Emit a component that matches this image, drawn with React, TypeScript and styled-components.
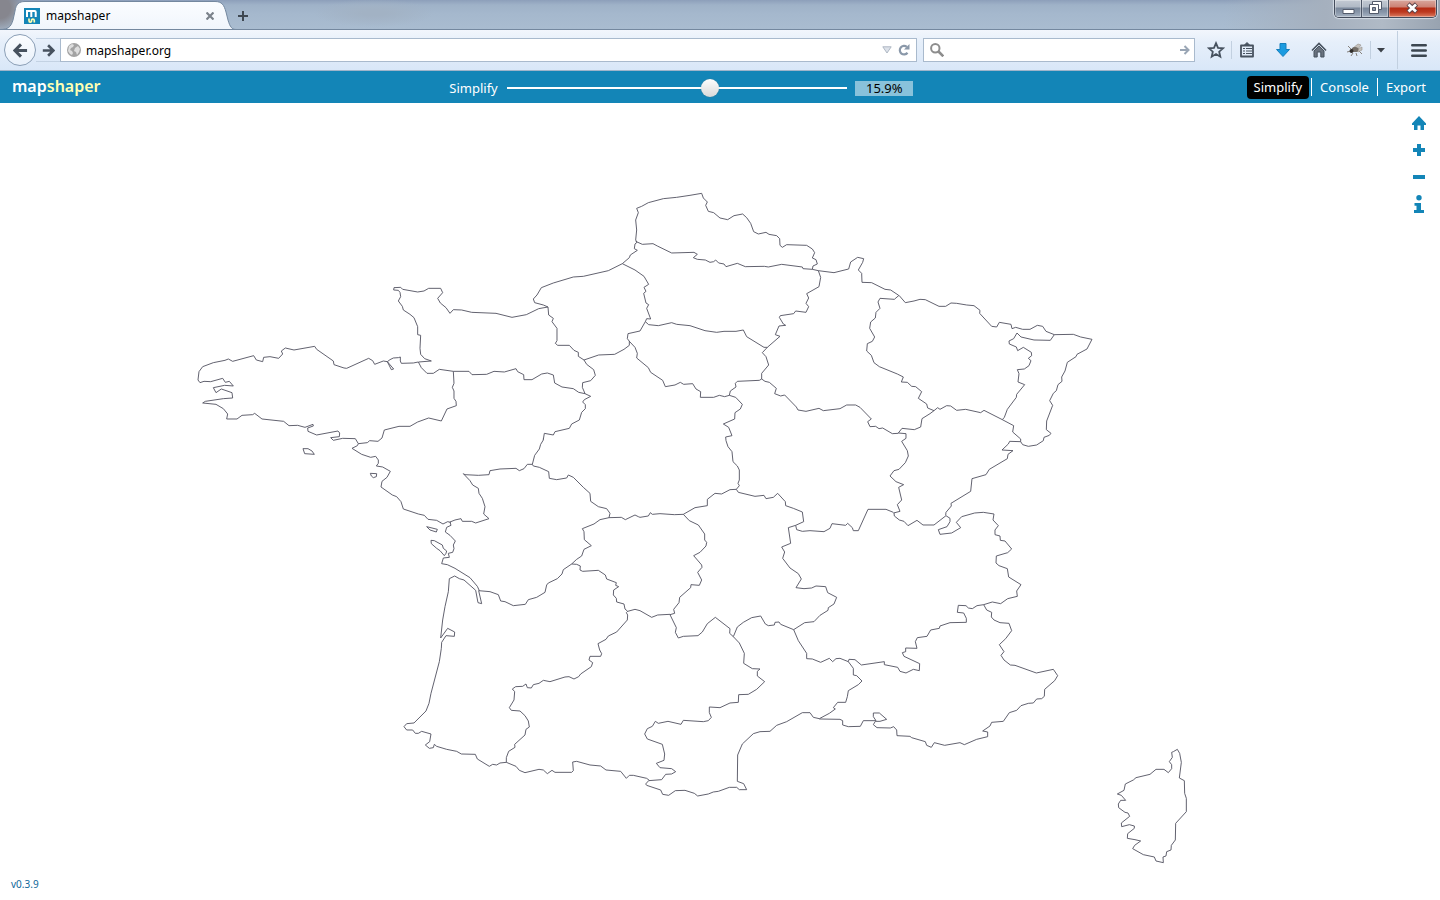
import React, { useState } from "react";
import styled, { createGlobalStyle } from "styled-components";

const GlobalStyle = createGlobalStyle`
  * { box-sizing: border-box; }
  body {
    margin: 0;
    background: #fff;
    font-family: "Noto Sans", "Open Sans", sans-serif;
  }
  button, input { font: inherit; margin: 0; padding: 0; border: 0; outline: 0; background: none; color: inherit; }
  button { cursor: pointer; }
  svg { display: block; }
`;

const accent = "#1385b7";

/* ---------- browser window ---------- */

const Page = styled.div`
  display: flex;
  flex-direction: column;
  min-height: 100vh;
`;

const TabStrip = styled.div`
  display: flex;
  align-items: flex-start;
  height: 30px;
  overflow: hidden;
  border-bottom: 1px solid #74889f;
  background:
    radial-gradient(ellipse 26px 26px at 0 8px, #86868e 40%, transparent),
    radial-gradient(ellipse 60px 14px at 374px 13px, #a2b2c4 20%, transparent),
    linear-gradient(to right, transparent 85%, #a5b0be 92%, #b0bac6 96%, #98a3b0),
    linear-gradient(#8d9fba 0, #9fb2c8 5px, #a5b8cd 14px, #a9bcd0 100%);
`;

const Tab = styled.div`
  position: relative;
  display: flex;
  align-items: center;
  flex: none;
  width: 236px;
  height: 30px;
  padding: 2px 20px 0 24px;
  font-size: 12px;
  line-height: 16px;
  color: #000;
`;

const TabShape = styled.svg`
  position: absolute;
  inset: 0;
`;

const TabTitle = styled.span`
  position: relative;
  flex: 1;
  padding-left: 6px;
`;

const Favicon = styled.svg`
  position: relative;
`;

const PlainButton = styled.button<{ $w?: number }>`
  position: relative;
  display: flex;
  flex: none;
  align-items: center;
  justify-content: center;
  width: ${(p) => p.$w ?? 24}px;
  height: 24px;
`;

const NewTab = styled(PlainButton)`
  width: 14px;
  height: 32px;
`;

const WindowControls = styled.div`
  display: flex;
  margin: 0 3px 0 auto;
  height: 18px;
  border: 1px solid #434c5c;
  border-top: 0;
  border-radius: 0 0 5px 5px;
  box-shadow: 0 0 1px 1px #d5dde6;
  overflow: hidden;
`;

const WindowButton = styled.button<{ $close?: boolean }>`
  display: flex;
  align-items: center;
  justify-content: center;
  width: ${(p) => (p.$close ? 47 : 27)}px;
  padding-bottom: 2px;
  border-right: ${(p) => (p.$close ? 0 : 1)}px solid #4c5666;
  box-shadow: inset 0 0 0 1px rgba(255, 255, 255, 0.35);
  background: ${(p) =>
    p.$close
      ? "linear-gradient(#d9a79d 0, #cc8173 7px, #b52c14 8px, #bd3a20 12px, #dc7d62)"
      : "linear-gradient(#c3cad3 0, #b0b9c5 7px, #7a889b 8px, #8795a8 12px, #a6b3c2)"};
`;

const Toolbar = styled.div`
  display: flex;
  align-items: center;
  height: 41px;
  padding: 0 9px 0 4px;
  border-bottom: 1px solid #9fb4ca;
  background: linear-gradient(#f2f6fc 0, #e6effa 12px, #d9e7f8);
`;

const BackButton = styled.button`
  display: flex;
  flex: none;
  align-items: center;
  justify-content: center;
  width: 32px;
  height: 32px;
  border: 1px solid #8b9fb6;
  border-radius: 50%;
  background: linear-gradient(#fbfdff, #e9f1fb);
`;

const ForwardButton = styled.button`
  display: flex;
  flex: none;
  align-items: center;
  justify-content: center;
  width: 24px;
  height: 24px;
  border: 1px solid #c3d2e3;
  border-width: 1px 0;
`;

const Field = styled.label<{ $grow: number }>`
  display: flex;
  align-items: center;
  flex: ${(p) => p.$grow} 1 0;
  min-width: 0;
  height: 24px;
  padding: 0 4px 0 6px;
  border: 1px solid #a9bacd;
  background: #fff;
`;

const SearchField = styled(Field)`
  margin: 0 9px 0 6px;
`;

const FieldInput = styled.input`
  flex: 1;
  min-width: 0;
  padding: 2px 0 0 5px;
  font-size: 12px;
  line-height: 16px;
  color: #000;
`;

const Tools = styled.div`
  display: flex;
  gap: 12px;
  margin-left: 3px;
`;

const Divider = styled.span<{ $tall?: boolean }>`
  flex: none;
  width: 1px;
  height: ${(p) => (p.$tall ? 38 : 18)}px;
  margin-left: ${(p) => (p.$tall ? 6 : 3)}px;
  margin-right: ${(p) => (p.$tall ? 9 : 0)}px;
  background: #c2d0e0;
`;

/* ---------- mapshaper ---------- */

const Header = styled.header`
  display: flex;
  align-items: center;
  height: 32px;
  padding: 0 14px 0 12px;
  background: ${accent};
  color: #fff;
  font-size: 13px;
  line-height: 18px;
`;

const Brand = styled.a`
  width: 88px;
  padding-bottom: 2px;
  color: #fff;
  font-size: 16px;
  font-weight: 600;
  line-height: 20px;
  text-decoration: none;
`;

const BrandAccent = styled.span`
  color: #ffffb3;
`;

const SimplifyControl = styled.div`
  display: flex;
  align-items: center;
  margin: 2px auto 0;
  padding-left: 16px;
`;

const SliderLabel = styled.label`
  width: 58px;
`;

const Slider = styled.input`
  appearance: none;
  width: 340px;
  height: 18px;
  cursor: pointer;
  &::-webkit-slider-runnable-track {
    height: 2px;
    background: #fff;
  }
  &::-webkit-slider-thumb {
    appearance: none;
    width: 18px;
    height: 18px;
    margin-top: -8px;
    border-radius: 50%;
    background: linear-gradient(#fdfdfd, #d9d9d9);
    box-shadow: 0 0 1px #777;
  }
`;

const Percent = styled.input`
  width: 58px;
  height: 15px;
  margin-left: 8px;
  background: #89c2db;
  color: #000;
  line-height: 15px;
  text-align: center;
`;

const Modes = styled.nav`
  display: flex;
  align-items: center;
`;

const Mode = styled.button<{ $active?: boolean }>`
  height: 23px;
  padding: 0 ${(p) => (p.$active ? 7 : 0)}px;
  border-radius: 4px;
  background: ${(p) => (p.$active ? "#000" : "transparent")};
`;

const ModeDivider = styled.span<{ $tight?: boolean }>`
  width: 1px;
  height: 18px;
  margin: 0 8px 0 ${(p) => (p.$tight ? 2 : 8)}px;
  background: #fff;
`;

const Stage = styled.main`
  position: relative;
  flex: 1;
`;

const MapView = styled.svg`
  width: 100%;
  height: auto;
  fill: none;
  stroke: #50505f;
`;

const MapTools = styled.div`
  position: absolute;
  top: 8px;
  right: 9px;
  display: flex;
  flex-direction: column;
  gap: 3px;
  color: ${accent};
`;

const Version = styled.span`
  position: absolute;
  left: 11px;
  bottom: 9px;
  color: #10699a;
  font-size: 10px;
  line-height: 14px;
`;

/* Region boundaries. Each sheet keeps integer coordinates, three units to a
   map unit, counted from the sheet's own origin. */
interface Sheet {
  origin: [number, number];
  arcs: string[];
}

const sheets: Sheet[] = [
  {
    origin: [180, 270],
    arcs: [
      "715,276 700,279 664,280 661,273 661,261 655,263 640,264 630,269 622,275 641,297 634,299 622,275 610,273 584,283 578,272 566,265 500,295 492,294 462,284 460,273 410,238 404,229 342,240 316,234 304,243 308,252 296,265 270,260 251,262 248,275 229,270 221,257 158,274 145,267 135,271 100,278 68,290 57,305 54,330 60,338 72,334 92,335 128,325 136,337 148,334 160,348 134,346 100,353 108,368 124,357 156,368 158,384 130,386 76,394 68,399 108,403 130,416 143,432 140,447 171,447 186,436 218,434 224,430 246,447 311,454 327,467 353,466 375,472 399,463 400,468 383,474 384,484 410,495 474,483 479,489 478,500 452,503 460,511 488,505 526,506 535,521 532,527 516,535 545,553 572,562 587,559 595,570 595,580 589,588 608,591 631,604 621,622 606,634 603,651 637,675 650,680 663,695 670,717 715,732 733,736 744,748 770,751 789,762 803,755 812,757",
      "535,521 562,518 569,512 594,514 606,504 613,480 657,469 690,469 713,456 746,444 784,453 801,417 829,407 828,394 822,385 822,363 817,352 822,340 820,304",
      "715,276 724,293 741,310 760,310 778,298 820,304",
      "369,536 374,551 403,553 396,543 384,536 369,536",
      "571,610 590,611 589,620 580,623 574,618 571,610",
      "740,770 772,778 769,786 750,780 740,770",
    ],
  },
  {
    origin: [390, 180],
    arcs: [
      "190,574 237,574 246,584 290,583 312,574 343,576 378,566 383,575 401,584 402,599 426,599 455,582 472,579 490,585 494,609 516,621 550,626 566,637 585,641 602,649",
      "86,546 124,543 104,536 92,523 90,505 92,466 83,464 83,440 72,413 60,403 40,390 37,379 25,363 32,350 30,337 25,331 11,330 12,323 32,322 38,328 83,336 102,333 116,325 152,325 158,338 143,355 151,369 168,383 180,400 190,389 215,390 245,397 318,400 366,412 409,404 446,386 474,381",
      "474,381 476,405 490,415 486,425 501,445 501,482 496,490 503,496 538,496 552,511 565,517 565,529 582,540",
      "474,381 460,375 434,368 430,357 441,345 454,323 490,309 550,291 580,289 655,272 697,251 718,233 721,225 742,211 733,206 735,192 741,187 737,180 740,150 737,120 745,98 740,85 755,79 775,68 820,56 860,52 900,46 935,40",
      "582,540 626,525 674,523 702,508 718,496 718,483",
      "460,778 463,760 490,765 495,755 538,745 545,732 568,720 575,697 586,686 586,674 578,666 583,659 602,649",
      "582,540 590,553 611,569 616,586 602,602 578,608 577,622 583,636 585,641",
    ],
  },
  {
    origin: [620, 180],
    arcs: [
      "245,40 250,54 262,66 257,76 265,94 281,98 300,114 323,119 342,107 368,102 380,113 392,130 401,155 415,162 438,157 447,163 470,167 479,176 480,196 487,202 500,194 560,196 577,207 584,218 577,234 588,239 592,252 579,258 577,268",
      "47,184 67,193 99,191 112,198 155,219 222,217 232,223 220,233 232,238 256,240 270,247 281,245 287,240 296,249 312,252 318,260 352,250 376,260 433,259 445,261 485,253 547,261 549,266 577,268 595,272 642,278 686,267 692,246 713,232 731,236 728,247 715,270 725,280 726,307 755,308 795,328 812,330 836,346",
      "7,251 45,270 72,289 86,313 72,322 78,334 71,340 78,369 86,374 80,385 92,417 80,416 76,425 60,453 24,461 22,476 29,485 45,502 52,520 50,534 85,563 92,577 128,601 136,620 165,615 181,607 191,613 218,611 228,627 242,635 241,652 281,652 298,646 314,650 328,646",
      "76,425 86,434 115,437 155,428 170,433 210,437 255,452 290,457 312,454 348,454 370,450 380,470 432,502 442,502",
      "595,272 602,292 597,320 560,341 566,354 558,370 566,380 558,397 527,393 521,401 481,407 478,412 490,432 497,436 477,438 466,464 480,469 442,502 427,518 438,530 446,555 425,580 425,597 418,601 352,604 346,610 348,621 331,633 328,646",
      "425,597 435,604 448,607 469,625 464,641 482,648 494,645 529,681 534,690 558,694 597,685 610,692 660,686 680,675 707,675 720,682 754,717 743,725 750,740 767,739 777,746 788,744 817,761 835,760",
      "328,646 347,652 367,673 361,687 345,698 344,717 310,732 326,742 336,767 317,771 318,782 324,800 336,815 339,845 352,858 358,870 358,900 354,910 358,917 349,928",
    ],
  },
  {
    origin: [850, 240],
    arcs: [
      "147,166 166,188 192,183 210,178 226,179 267,199 287,199 303,189 320,190 350,195 372,197 390,211 389,220 425,259 440,261 448,247 483,253 486,266 497,262 518,268 540,268 562,256 578,259 588,274 613,284 670,283 692,291 726,298 711,327 681,343 678,350 652,367 645,393 635,411 636,424 624,434 619,452 610,460 599,482 608,496 590,543 589,569 603,580 598,586 582,592 580,602 560,615 535,619 518,614 512,605 512,597 488,576 491,557 457,539",
      "613,284 601,301 552,300 513,291 501,279 491,296 477,303 478,312 499,321 503,332 520,322 544,337 545,347 535,355 543,362 537,377 523,387 502,389 507,401 504,426 524,434 500,463 499,472 472,508 463,532 457,539",
      "147,166 133,178 90,175 84,186 90,205 78,217 76,234 62,246 59,265 74,291 67,304 52,311 50,333 64,346 72,368 88,380 142,402 160,411 154,426 172,427 185,439 197,440 215,455 205,475 230,492 233,504 252,512 240,521 216,536 212,561 193,569 156,565 145,579",
      "252,512 263,503 270,508 290,497 302,498 320,511 347,508 392,518 402,511 457,539",
      "512,605 479,604 475,612 456,630 489,632 474,643 472,656 418,688 408,704 366,716 362,754 303,790 304,798 288,817 287,826",
      "145,579 168,581 168,595 155,604 172,632 175,648 166,668 147,688 132,692 120,708 138,725 161,734 146,742 155,780 142,794 150,814 131,819",
    ],
  },
  {
    origin: [820, 480],
    arcs: [
      "222,98 223,108 238,120 252,124 264,137 291,121 309,135 342,135 378,107 390,115 390,125 381,140 355,149 360,163 395,159 422,143 409,127 425,110 464,99 490,97 522,102 519,120 535,137 525,150 525,164 540,168 541,181 555,183 575,207 563,218 529,228 528,249 537,257 562,266 566,291 603,314 590,333 592,349 563,356 542,371 517,366 491,374 471,377 457,386 445,384 438,377 415,376 412,397 431,399 439,415 439,427 390,428 360,438 358,445 332,450 321,469 292,473 286,485 291,505 257,504 257,515 247,518 252,529 299,551 298,572 280,568 258,579 240,574 233,562 193,554 193,545 124,555 105,539 87,538 85,545",
      "491,374 500,390 515,397 514,411 522,420 540,428 567,430 575,452 557,476 538,494 552,515 543,526 552,540 571,555 585,556 649,579 700,568 713,587 704,602 674,628 673,649 665,656 650,657 640,669 625,670 603,677 590,691 568,698 550,724 515,727 510,738 488,753 503,756 503,770 470,778 433,794 420,788 374,796 343,788 334,802 320,796 316,785 275,773 270,769 231,767 230,750 221,740 211,744 171,743 160,734 166,724 180,724 200,718 178,699 160,699 160,710 168,722 130,722 121,739 85,740 68,735 68,722 60,718 -2,717",
      "85,545 100,565 100,585 110,587 126,603 115,614 85,632 82,650 77,667 53,667 40,683 46,687 28,700 -2,716",
    ],
  },
  {
    origin: [640, 470],
    arcs: [
      "760,127 738,118 684,118 655,182 640,182 637,173 623,160 617,166 576,161 570,175 552,185 510,182 487,184 470,179 467,166 491,155 487,126 460,115 437,107 436,95 413,70 400,82 378,86 372,76 345,79 295,67 289,58 270,59 245,72 225,70 202,88 202,107 165,113 130,133 103,134 60,131 37,133 31,128 25,138 0,142",
      "130,133 148,152 175,165 194,192 194,210 200,217 198,228 180,247 161,257 185,285 186,292 173,307 185,330 178,346 153,344 152,353 119,382 117,398 101,418 104,430 90,434",
      "90,434 109,473 106,487 115,504 130,499 174,497 187,486 202,461 226,442 270,476 269,490 280,500",
      "280,500 292,471 310,457 335,443 362,438 376,462 385,467 403,465 405,457 417,456 422,463 461,479",
      "467,166 445,173 452,220 425,231 434,246 428,265 450,294 475,311 484,327 468,353 492,356 515,354 528,348 557,350 563,368 590,382 582,402 565,413 564,421 540,436 522,455 494,458 461,479",
      "461,479 475,512 500,550 500,566 517,567 542,577 568,565 578,575 588,566 600,565 625,575",
      "280,500 298,519 313,550 311,580 337,596 360,597 352,604 352,618 374,635 350,658 325,673 296,674 295,697 270,699 240,713 208,711 208,728 214,742 205,752 190,755 130,751 123,763 84,754 55,760 46,754 37,769 22,776 14,792 22,807 67,823 74,852 72,871 49,880 60,893 95,896 107,905 95,912 77,913 65,929 26,932",
      "538,746 520,742 510,728 487,728 440,755 410,766 390,784 360,785 340,791 307,822 293,855 292,934 311,941 320,959 298,959 290,952 268,952 235,964 220,966 205,972 173,978 163,970 135,961 106,962 86,976 68,973 62,960 20,946 17,942 26,932",
    ],
  },
  {
    origin: [390, 430],
    arcs: [
      "750,262 745,260 735,255 706,269 694,262 657,263",
      "545,402 560,388 575,378 582,358 604,347 583,329 582,305 577,296 612,282 630,269 657,263 660,250 650,236 625,230 602,214 600,190 580,172 550,142 535,135 530,144 500,149 478,145 476,125 448,112 430,108 427,103",
      "427,103 412,103 402,116 388,122 378,115 330,117 300,122 297,134 265,136 225,134 220,131 240,152 248,165 265,175 267,190 277,205 285,230 281,252 297,266 257,279 245,274 217,274 213,266 195,270 180,276",
      "427,103 434,76 448,57 452,43 460,30 460,26",
      "180,276 183,286 170,292 166,306 180,316 196,333 190,345 192,356 188,367 175,370 178,382 160,384 155,401 172,404 195,415 240,443 262,469 268,482",
      "123,331 133,332 157,345 160,355 170,363 168,370 163,377 150,362 140,355 124,341 123,331",
    ],
  },
  {
    origin: [390, 560],
    arcs: [
      "778,661 770,655 730,646 718,646 709,655 692,634 648,630 632,618 600,615 560,604 548,606 550,632 545,637 495,637 486,631 472,641 460,630 447,628 405,638 388,631 378,619 349,607 330,609 320,615 308,613 298,619 262,597 256,583 214,582 200,574 170,568 140,559 133,553 130,563 118,565 106,555 119,545 123,522 95,514 85,520 76,520 68,510 50,510 42,500 50,491 72,489 108,453 117,430 123,400 148,305 154,265 155,247 168,227 193,229 194,216 173,205 152,234 158,180 165,140 175,95 178,56 194,48 208,56 222,60 257,91 264,128 275,131 266,92",
      "349,607 349,593 356,574 375,562 374,553 405,525 408,508 418,501 415,483 405,467 390,453 364,451 358,443 372,420 374,395 367,387 377,380 398,379 408,372 412,383 424,384 430,374 447,370 460,361 480,365 525,351 537,350 552,357 566,350 572,342 604,320 608,308 597,300 600,289 632,289 635,281 629,270 624,251 648,238 655,228 680,216 712,180 713,165 709,158 713,154",
      "713,154 735,148 750,152 785,172 803,165 840,163",
      "713,154 705,147 702,132 680,126 679,115 670,105 671,90 686,80 677,76 679,68 650,57 646,45 625,31 578,34 570,30 571,18 560,13 545,12",
      "266,92 300,95 325,104 332,123 345,125 370,137 406,133 415,119 440,112 465,97 470,75 475,69 502,56 516,42 520,29 545,12",
    ],
  },
  {
    origin: [1100, 730],
    arcs: [
      "220,65 232,58 239,70 244,97 238,144 253,152 254,190 259,205 259,245 227,280 226,330 214,346 213,360 200,365 198,378 189,381 190,398 168,393 163,381 130,374 98,356 104,346 122,333 105,329 82,325 83,311 103,295 103,288 88,284 65,290 64,279 89,259 84,249 75,247 56,233 55,222 62,211 77,211 64,196 52,192 72,181 76,162 100,150 108,143 150,133 168,118 192,118 205,128 215,116 215,104 208,95 217,82 215,67 220,65",
    ],
  },
];

const RegionMap = () => (
  <MapView viewBox="0 103 1440 797" role="img" aria-label="Regions of France">
    {sheets.map(({ origin: [x, y], arcs }) => (
      <g key={`${x}-${y}`} transform={`translate(${x} ${y}) scale(0.33333)`}>
        {arcs.map((points) => (
          <polyline key={points} points={points} strokeWidth={2.7} strokeLinejoin="round" />
        ))}
      </g>
    ))}
  </MapView>
);

const ArrowIcon = ({ size, flip }: { size: number; flip?: boolean }) => (
  <svg width={size} height={size} viewBox="0 0 16 16" fill="none" stroke="#47525f" strokeWidth="3.200">
    <path d={flip ? "M1 8h12M7.500 1.500L14 8l-6.500 6.500" : "M15 8H3M8.500 1.500L2 8l6.500 6.500"} />
  </svg>
);

export default function App() {
  const [position, setPosition] = useState(60.3);
  const [percent, setPercent] = useState("15.9%");
  return (
    <Page>
      <GlobalStyle />
      <TabStrip>
        <Tab>
          <TabShape width="236" height="30" viewBox="0 0 236 30">
            <defs>
              <linearGradient id="tab" x2="0" y2="1">
                <stop offset="0" stopColor="#fbfdff" />
                <stop offset="1" stopColor="#f0f5fc" />
              </linearGradient>
            </defs>
            <path
              d="M0 29.500C8 29.500 11 27 13 20L15 11C16 4 19 1.500 25 1.500H215C222 1.500 224 5 226 12L228 20C230 27 232 29.500 236 29.500V31H0Z"
              fill="url(#tab)"
              stroke="#74889f"
            />
          </TabShape>
          <Favicon width="16" height="16" viewBox="0 0 16 16" aria-hidden="true">
            <path d="M0 0h16v16H0z" fill={accent} />
            <g fill="none" strokeWidth="2">
              <path d="M3 9V3h7.700q1 0 1 1v5M7.300 3v6" stroke="#fff" />
              <path d="M5 10.500v2q0 1.700 1.300 1.700T7.500 12.700t1.300-1.500T10.300 12.500v2" stroke="#ffffb3" strokeWidth="1.700" />
            </g>
          </Favicon>
          <TabTitle>mapshaper</TabTitle>
          <PlainButton $w={12} aria-label="Close tab">
            <svg width="8" height="8" viewBox="0 0 8 8" stroke="#7b828b" strokeWidth="2.200">
              <path d="M.5.5l7 7M7.500.5l-7 7" />
            </svg>
          </PlainButton>
        </Tab>
        <NewTab aria-label="New tab">
          <svg width="10" height="10" viewBox="0 0 10 10" stroke="#3f4852" strokeWidth="2">
            <path d="M5 0v10M0 5h10" />
          </svg>
        </NewTab>
        <WindowControls>
          <WindowButton aria-label="Minimize">
            <svg width="13" height="14" viewBox="0 0 13 14">
              <path d="M1 8.500h11v4H1z" fill="#fff" stroke="#535b6b" />
            </svg>
          </WindowButton>
          <WindowButton aria-label="Restore">
            <svg width="13" height="13" viewBox="0 0 13 13" fill="#fff" stroke="#535b6b">
              <path d="M3.500.5h9v8h-9z" />
              <path d="M.5 3.500h9v9h-9z" />
              <path d="M3.500 6.500h3v3h-3z" fill="#8a97a9" />
            </svg>
          </WindowButton>
          <WindowButton $close aria-label="Close">
            <svg width="13" height="12" viewBox="0 0 13 12">
              <path d="M2 2l8.500 8M10.500 2L2 10" stroke="#5b4248" strokeWidth="4.600" />
              <path d="M2.500 2.500l7.500 7M10 2.500l-7.500 7" stroke="#fff" strokeWidth="2.800" />
            </svg>
          </WindowButton>
        </WindowControls>
      </TabStrip>

      <Toolbar>
        <BackButton aria-label="Back">
          <ArrowIcon size={15} />
        </BackButton>
        <ForwardButton aria-label="Forward">
          <ArrowIcon size={13} flip />
        </ForwardButton>
        <Field $grow={844}>
          <svg width="14" height="14" viewBox="0 0 14 14">
            <circle cx="7" cy="7" r="7" fill="#a3a3a3" />
            <path d="M2 3l3-2 2 1-1 2-2 1-1 2 2 1 1 2-1 2-2-1-2-3zM8 5l3-2 2 3-1 3-2 3-1-3-2-1z" fill="#dedede" />
          </svg>
          <FieldInput aria-label="Address" defaultValue="mapshaper.org" />
          <PlainButton $w={18} aria-label="Show history">
            <svg width="10" height="8" viewBox="0 0 10 8">
              <path d="M.8.8h8.400L5 7z" fill="#dde2ea" stroke="#aeb7c3" />
            </svg>
          </PlainButton>
          <PlainButton $w={16} aria-label="Reload">
            <svg width="12" height="12" viewBox="0 0 12 12">
              <path d="M9.500 8.800A4.300 4.300 0 1 1 8.800 2.800" fill="none" stroke="#8a98a9" strokeWidth="2.200" />
              <path d="M11.500 0v5.500H6z" fill="#8a98a9" />
            </svg>
          </PlainButton>
        </Field>
        <SearchField $grow={260}>
          <svg width="14" height="14" viewBox="0 0 14 14" fill="none" stroke="#8d8d8d">
            <circle cx="5.300" cy="5.300" r="4.200" strokeWidth="2" />
            <path d="M8.500 8.500l4.800 4.800" strokeWidth="2.600" />
          </svg>
          <FieldInput aria-label="Search" />
          <svg width="10" height="10" viewBox="0 0 10 10" fill="none" stroke="#9aa6b5" strokeWidth="2">
            <path d="M0 5h8M4.500 1l4 4-4 4" />
          </svg>
        </SearchField>

        <PlainButton aria-label="Bookmark this page">
          <svg width="18" height="18" viewBox="0 0 18 18" fill="none" stroke="#47525f" strokeWidth="1.800">
            <path d="M9 2.200l2 4.600 5 .5-3.800 3.400 1.100 5L9 13.100l-4.300 2.600 1.100-5L2 7.300l5-.5z" />
          </svg>
        </PlainButton>
        <Divider />
        <Tools>
          <PlainButton aria-label="Bookmarks menu">
            <svg width="16" height="16" viewBox="0 0 16 16" fill="none" stroke="#47525f">
              <path d="M2 3.500h12v11H2z" strokeWidth="1.800" strokeLinejoin="round" />
              <path d="M5 3.500L8 .5l3 3z" fill="#47525f" />
              <path d="M4 6.500h2m1 0h6M4 9h2m1 0h6M4 11.500h2m1 0h6" strokeWidth="1.200" />
            </svg>
          </PlainButton>
          <PlainButton aria-label="Downloads">
            <svg width="16" height="16" viewBox="0 0 16 16">
              <path d="M5 1.500h6v6h3.500L8 14.500 1.500 7.500H5z" fill="#1b9be0" stroke="#147fbd" />
            </svg>
          </PlainButton>
          <PlainButton aria-label="Home page">
            <svg width="16" height="16" viewBox="0 0 16 16">
              <path d="M1 8.500l7-7 7 7" fill="none" stroke="#47525f" strokeWidth="1.700" />
              <path d="M3 9l5-5 5 5v6H9.800v-5H6.200v5H3z" fill="#69727e" stroke="#47525f" />
            </svg>
          </PlainButton>
          <PlainButton aria-label="Firebug">
            <svg width="16" height="14" viewBox="0 0 16 14" fill="none">
              <path d="M5 7L1 3M4 8L0 9M6 10l-2 3M9 10l1 3M12 8l3 3" stroke="#85817c" />
              <path d="M6 5l5-4 3 1-3 4zM9 7l6-3v3l-4 2z" fill="#c5c1bc" stroke="#96918a" strokeWidth=".6" />
              <ellipse cx="8" cy="6.500" rx="3.500" ry="2.600" fill="#726d67" />
              <circle cx="4.500" cy="8" r="2" fill="#2f2d2b" />
            </svg>
          </PlainButton>
        </Tools>
        <Divider />
        <PlainButton $w={20} aria-label="Firebug options">
          <svg width="8" height="5" viewBox="0 0 8 5">
            <path d="M0 0h8L4 4.500z" fill="#3b4148" />
          </svg>
        </PlainButton>
        <Divider $tall />
        <PlainButton aria-label="Open menu">
          <svg width="16" height="13" viewBox="0 0 16 13" stroke="#3c4650" strokeWidth="2.600" strokeLinecap="round">
            <path d="M1.300 1.300h13.400M1.300 6.500h13.400M1.300 11.700h13.400" />
          </svg>
        </PlainButton>
      </Toolbar>

      <Header>
        <Brand href="#">
          map<BrandAccent>shaper</BrandAccent>
        </Brand>
        <SimplifyControl>
          <SliderLabel htmlFor="simplify">Simplify</SliderLabel>
          <Slider
            id="simplify"
            type="range"
            min={0}
            max={100}
            step={0.1}
            value={position}
            onChange={(e) => setPosition(Number(e.target.value))}
          />
          <Percent aria-label="Retained vertices" value={percent} onChange={(e) => setPercent(e.target.value)} />
        </SimplifyControl>
        <Modes>
          <Mode $active>Simplify</Mode>
          <ModeDivider $tight />
          <Mode>Console</Mode>
          <ModeDivider />
          <Mode>Export</Mode>
        </Modes>
      </Header>

      <Stage>
        <RegionMap />
        <MapTools>
          <PlainButton aria-label="Zoom to full extent">
            <svg width="14" height="14" viewBox="0 0 14 14" fill="currentColor">
              <path d="M7 0l7 7.500V9h-2v5H8.500V9.500h-3V14H2V9H0V7.500z" />
            </svg>
          </PlainButton>
          <PlainButton aria-label="Zoom in">
            <svg width="12" height="12" viewBox="0 0 12 12" fill="currentColor">
              <path d="M4 0h4v4h4v4H8v4H4V8H0V4h4z" />
            </svg>
          </PlainButton>
          <PlainButton aria-label="Zoom out">
            <svg width="12" height="4" viewBox="0 0 12 4" fill="currentColor">
              <path d="M0 0h12v4H0z" />
            </svg>
          </PlainButton>
          <PlainButton aria-label="Inspect features">
            <svg width="10" height="18" viewBox="0 0 10 18" fill="currentColor">
              <circle cx="5" cy="2.800" r="2.700" />
              <path d="M.5 8H7v7h3v3H0v-3h2.500v-4.200h-2z" />
            </svg>
          </PlainButton>
        </MapTools>
        <Version>v0.3.9</Version>
      </Stage>
    </Page>
  );
}
